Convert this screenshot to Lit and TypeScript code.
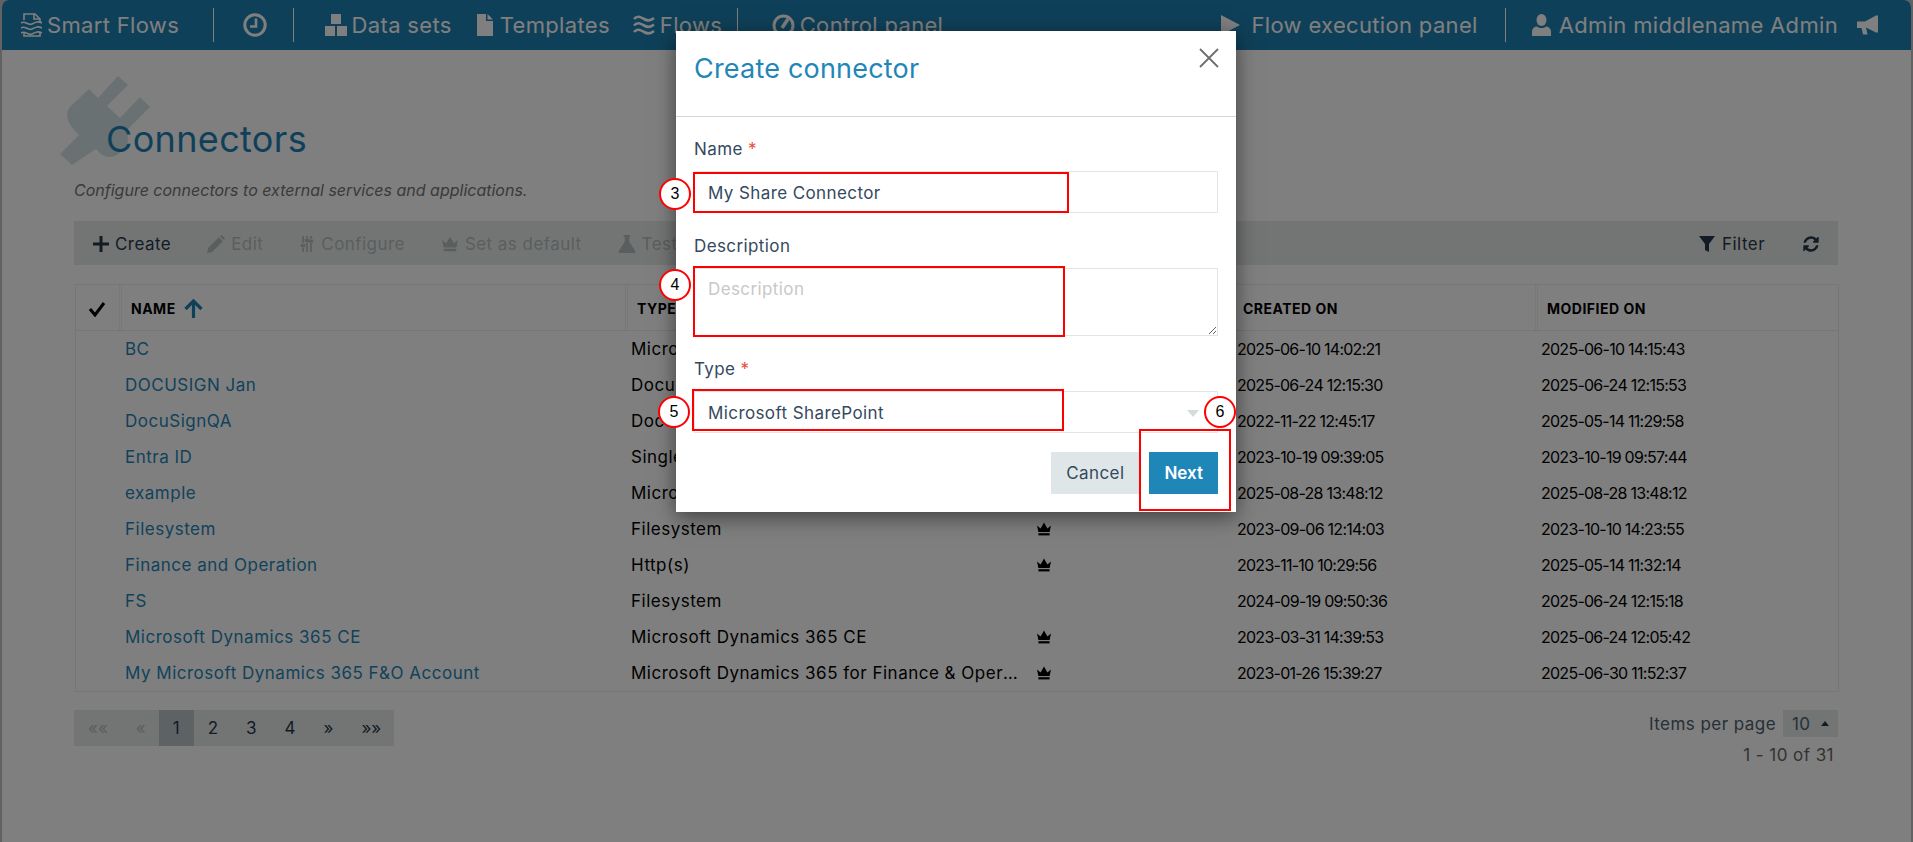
import { LitElement, html, css } from "lit";
import { customElement } from "lit/decorators.js";

const crown = html`<svg class="ic" viewBox="0 0 16 16"><path d="M1 4.500 4.600 7.400 8 1.500l3.400 5.900L15 4.500 13.600 11H2.400z" fill="currentColor"/><rect x="2.400" y="12.200" width="11.200" height="2.200" fill="currentColor"/></svg>`;
const refresh = "M1639 1056q0 5-1 7-64 268-268 434.5t-478 166.5q-146 0-282.5-55t-243.5-157l-129 129q-19 19-45 19t-45-19-19-45v-448q0-26 19-45t45-19h448q26 0 45 19t19 45-19 45l-137 137q71 66 161 102t187 36q134 0 250-65t186-179q11-17 53-117 8-23 30-23h192q13 0 22.5 9.5t9.5 22.5zm25-800v448q0 26-19 45t-45 19h-448q-26 0-45-19t-19-45 19-45l138-138q-148-137-349-137-134 0-250 65t-186 179q-11 17-53 117-8 23-30 23h-199q-13 0-22.5-9.5t-9.5-22.5v-7q65-268 270-434.5t480-166.5q146 0 284 55.5t245 156.5l130-129q19-19 45-19t45 19 19 45z";

const rows: [string, string, boolean, string, string][] = [
  ["BC", "Microsoft Dynamics 365 Business Central", false, "2025-06-10 14:02:21", "2025-06-10 14:15:43"],
  ["DOCUSIGN Jan", "DocuSign", false, "2025-06-24 12:15:30", "2025-06-24 12:15:53"],
  ["DocuSignQA", "DocuSign", false, "2022-11-22 12:45:17", "2025-05-14 11:29:58"],
  ["Entra ID", "Single Sign-On", false, "2023-10-19 09:39:05", "2023-10-19 09:57:44"],
  ["example", "Microsoft SharePoint", false, "2025-08-28 13:48:12", "2025-08-28 13:48:12"],
  ["Filesystem", "Filesystem", true, "2023-09-06 12:14:03", "2023-10-10 14:23:55"],
  ["Finance and Operation", "Http(s)", true, "2023-11-10 10:29:56", "2025-05-14 11:32:14"],
  ["FS", "Filesystem", false, "2024-09-19 09:50:36", "2025-06-24 12:15:18"],
  ["Microsoft Dynamics 365 CE", "Microsoft Dynamics 365 CE", true, "2023-03-31 14:39:53", "2025-06-24 12:05:42"],
  ["My Microsoft Dynamics 365 F&O Account", "Microsoft Dynamics 365 for Finance & Operations", true, "2023-01-26 15:39:27", "2025-06-30 11:52:37"],
];

@customElement("app-root")
export class AppRoot extends LitElement {
  static styles = css`
    :host { display: block; font-family: Inter, "Liberation Sans", sans-serif; background: #c4c4c4; }
    * { box-sizing: border-box; }
    .stage { position: relative; height: 842px; overflow: hidden; }
    .app { margin: 0 2px; height: 842px; background: #fff; border-radius: 7px 7px 0 0; overflow: hidden; }
    .nav { height: 50px; background: #1f80b2; color: #fff; display: flex; align-items: center; padding: 0 33px 0 19px; font-size: 22px; letter-spacing: .33px; white-space: nowrap; }
    .nav svg { flex: none; display: block; }
    .item { display: flex; align-items: center; gap: 5px; }
    .sep { width: 1px; height: 34px; background: #fff; flex: none; }
    .s1 { margin-left: 33.500px; } .c1 { margin-left: 29px; } .s2 { margin-left: 26px; }
    .d1 { margin-left: 31px; } .t1 { margin-left: 25px; } .f1 { margin-left: 23px; }
    .s3 { margin-left: 14.500px; } .cp { margin-left: 34px; }
    .fe { margin-left: auto; } .s4 { margin-left: 27px; } .u1 { margin-left: 26px; } .m1 { margin-left: 19px; }
    .t-ic { gap: 7px; } .p-ic { gap: 11px; } .u1.t-ic { gap: 8px; }

    .content { padding: 67px 73px 0 72px; }
    .title { position: relative; padding-left: 32px; }
    .plug { position: absolute; left: -14px; top: -47px; width: 90px; height: 95px; color: #d5e2e4; }
    h1 { position: relative; margin: 0; font-size: 36px; line-height: 44px; font-weight: 400; letter-spacing: .35px; color: #1f80b2; }
    .sub { margin: 19px 0 0; font-size: 16px; line-height: 20px; font-style: italic; color: #757575; }

    .toolbar { margin-top: 21px; height: 44px; background: #e6eaea; display: flex; align-items: center; padding: 1px 0 0 19px; font-size: 17px; letter-spacing: .45px; color: #b5bdbe; }
    .tool { display: flex; align-items: center; gap: 6px; margin-right: 36px; }
    .tool.on { color: #26384a; }
    .ic { width: 16px; height: 16px; flex: none; display: block; }
    .toolbar .wide { width: 18px; height: 18px; }
    .end { margin-left: auto; margin-right: 18px; display: flex; align-items: center; color: #26384a; }
    .end .tool { margin-right: 37px; gap: 7px; }
    .end .tool:last-child { margin: 0; }

    .table { margin: 19px 0 0 1px; border: 1px solid #ebefef; width: 1764px; }
    .hd, .row { display: grid; grid-template-columns: 43px 506px 405px 201px 304px 1fr; align-items: center; }
    .hd { height: 46px; border-bottom: 1px solid #ebefef; font-size: 14px; font-weight: 700; color: #000; text-transform: uppercase; letter-spacing: .5px; }
    .hd > div { padding: 2px 0 0 9px; height: 100%; display: flex; align-items: center; gap: 8px; border-left: 3px double #eff3f3; }
    .hd > div:first-child { padding-left: 12px; border-left: 0; }
    .row { height: 36px; font-size: 17px; letter-spacing: .5px; color: #000; }
    .row > div { padding: 0 6px; white-space: nowrap; overflow: hidden; text-overflow: ellipsis; }
    .row > .date { font-size: 16px; letter-spacing: -.74px; }
    .row a { color: #2585b5; }

    .foot { display: flex; justify-content: space-between; margin-top: 18px; }
    .pager { display: flex; height: 36px; background: #e6eaea; font-size: 17px; color: #26384a; align-items: center; }
    .pager span { padding: 0 14px; height: 100%; display: flex; align-items: center; }
    .pager .off { color: #b5bdbe; }
    .pager .off + .off { padding-right: 13px; }
    .pager .cur { background: #bac6ca; }
    .pager span:last-child { padding-right: 13px; }
    .right { display: flex; flex-direction: column; align-items: flex-end; font-size: 17px; letter-spacing: .45px; color: #4d6070; }
    .ipp { display: flex; align-items: center; gap: 7px; }
    .size { width: 55px; height: 27px; background: #e6eaea; display: flex; align-items: center; padding-left: 9px; gap: 10px; }
    .caret-up { width: 0; height: 0; border: 4.500px solid transparent; border-top: 0; border-bottom: 5px solid #26384a; }
    .count { margin: 8px 4px 0 0; line-height: 20px; color: #666; }

    .backdrop { position: absolute; inset: 0; background: rgba(0,0,0,.5); }
    .modal { position: absolute; left: 676px; top: 31px; width: 560px; height: 481px; background: #fff; box-shadow: 0 5px 20px rgba(0,0,0,.5); color: #34495e; font-size: 17px; letter-spacing: .4px; }
    .mh { height: 86px; border-bottom: 1px solid #cfd8da; padding: 20px 18px 0; display: flex; justify-content: space-between; align-items: flex-start; }
    h2 { margin: 1px 0 0; font-size: 27px; line-height: 34px; font-weight: 400; letter-spacing: .2px; color: #1f86b8; }
    .x { width: 20px; height: 20px; color: #6e6e6e; margin: -3px -1px 0 0; display: block; }
    .mb { padding: 20px 18px 0 18px; }
    .group { margin-bottom: 21px; }
    label { display: block; line-height: 24px; margin-bottom: 10px; color: #34495e; }
    .req { color: #e74c3c; }
    .field { display: block; width: 100%; height: 42px; border: 1px solid #dfe6e7; padding: 2px 13px 0; font: inherit; letter-spacing: inherit; color: #34495e; outline: none; background: #fff; border-radius: 0; }
    textarea.field { height: 68px; padding: 10px 13px; resize: vertical; display: block; }
    textarea.field::placeholder { color: #c8c8c8; }
    .select { display: flex; align-items: center; justify-content: space-between; padding-right: 18px; }
    .select i { width: 0; height: 0; border: 6px solid transparent; border-bottom: 0; border-top: 7px solid #d6dcdd; }
    .btns { display: flex; justify-content: flex-end; gap: 10px; margin-top: -2px; }
    .btn { height: 42px; border: 0; padding: 0 15px; font: inherit; letter-spacing: inherit; background: #dfe6e7; color: #34495e; }
    .btn.go { background: #1f86b8; color: #fff; font-weight: 600; letter-spacing: 0; }

    .box { position: absolute; border: 2px solid #f00; }
    .b3 { left: 17px; top: 141px; width: 376px; height: 41px; }
    .b4 { left: 17px; top: 235px; width: 372px; height: 71px; }
    .b5 { left: 16px; top: 358px; width: 372px; height: 42px; }
    .b6 { left: 463px; top: 398px; width: 92px; height: 82px; }
    .num { position: absolute; width: 32px; height: 32px; border-radius: 50%; border: 2px solid #f00; background: #fff; color: #000; font: 16px/28px "Liberation Sans", sans-serif; letter-spacing: 0; text-align: center; }
    .n3 { left: -17px; top: 147px; } .n4 { left: -17px; top: 238px; }
    .n5 { left: -18px; top: 365px; } .n6 { left: 528px; top: 365px; }
  `;

  render() {
    return html`<div class="stage">
      <div class="app">
        <div class="nav">
          <div class="item">
            <svg width="21" height="24" viewBox="0 0 21 24" fill="none" stroke="currentColor" stroke-width="1.600"><path d="M3 7V1h11l5 5v3M3 20v3h16v-3"/><path d="M13 1v5h6" /><path d="M0 10c4-3 7 3 11 1s6-3 10-1M0 15c4-3 7 3 11 1s6-3 10-1M0 20c4-3 7 3 11 1s6-3 10-1"/></svg>
            <span>Smart Flows</span>
          </div>
          <div class="sep s1"></div>
          <svg class="c1" width="24" height="24" viewBox="0 0 24 24" fill="none" stroke="currentColor" stroke-width="3"><circle cx="12" cy="12" r="10.200"/><path d="M13 5.500V13.500H7" stroke-width="2.600"/></svg>
          <div class="sep s2"></div>
          <div class="item d1"><svg width="22" height="22" viewBox="0 0 22 22" fill="currentColor"><rect x="6" y="0" width="10" height="10"/><rect x="0" y="12" width="10" height="10"/><rect x="12" y="12" width="10" height="10"/></svg><span>Data sets</span></div>
          <div class="item t1 t-ic"><svg width="16" height="22" viewBox="0 0 16 22" fill="currentColor"><path d="M0 0h9v7h7v15H0z"/><path d="M10.500 0 16 5.500h-5.500z"/></svg><span>Templates</span></div>
          <div class="item f1"><svg width="22" height="20" viewBox="0 0 22 20" fill="none" stroke="currentColor" stroke-width="2.600"><path d="M1 4c3.500-4 6.500-2 10 0s6.500 2 10-1M1 10.500c3.500-4 6.500-2 10 0s6.500 2 10-1M1 17c3.500-4 6.500-2 10 0s6.500 2 10-1"/></svg><span>Flows</span></div>
          <div class="sep s3"></div>
          <div class="item cp"><svg width="23" height="22" viewBox="0 0 23 22" fill="none" stroke="currentColor"><circle cx="11.500" cy="11.500" r="9.500" stroke-width="3"/><path d="M10 14 16 5" stroke-width="3.500"/></svg><span>Control panel</span></div>
          <div class="item fe p-ic"><svg width="19" height="20" viewBox="0 0 19 20" fill="currentColor"><path d="M0 0 19 10 0 20z"/></svg><span>Flow execution panel</span></div>
          <div class="sep s4"></div>
          <div class="item u1 t-ic"><svg width="19" height="22" viewBox="0 0 19 22" fill="currentColor"><ellipse cx="9.500" cy="6" rx="5" ry="6"/><path d="M0 22v-4c0-4 3-5.500 5-5.500 2.500 2 6.500 2 9 0 2 0 5 1.500 5 5.500v4z"/></svg><span>Admin middlename Admin</span></div>
          <svg class="m1" width="21" height="20" viewBox="0 0 21 20" fill="currentColor"><path d="M0 6.500h8L19 .5h2v17h-2L9 12.500l1.500 7H6L4.500 13H0z"/></svg>
        </div>
        <div class="content">
          <div class="title">
            <svg class="plug" viewBox="0 0 90 95" fill="currentColor"><path d="M29 19l9 9L58 6l10 9-21 21 13 12 20-21 10 10-24 24c4 8 2 14-5 21-9 8-18 6-25-3L12 95 0 84l19-19C5 52 5 42 11 36z"/></svg>
            <h1>Connectors</h1>
          </div>
          <p class="sub">Configure connectors to external services and applications.</p>
          <div class="toolbar">
            <div class="tool on"><svg class="ic" viewBox="0 0 16 16" fill="currentColor"><path d="M6.500 0h3v6.500H16v3H9.500V16h-3V9.500H0v-3h6.500z"/></svg>Create</div>
            <div class="tool"><svg class="ic wide" viewBox="0 0 16 16" fill="currentColor"><path d="M0 16l1-4.500L10.500 2l3.500 3.500L4.500 15zM11.500 1 13 0l3 3-1 1.500z"/></svg>Edit</div>
            <div class="tool"><svg class="ic" viewBox="0 0 16 18" fill="currentColor"><path d="M2.500 0h2v8h-2zM2.500 13h2v5h-2zM7 0h2v3H7zM7 8h2v10H7zM11.500 0h2v3h-2zM11.500 8h2v10h-2zM1 9h5v3.500H1zM10 4h5v3.500h-5zM5.500 3.500h5v3.500h-5z" /></svg>Configure</div>
            <div class="tool"><svg class="ic wide" viewBox="0 0 16 16"><path d="M1 4.500 4.600 7.400 8 1.500l3.400 5.900L15 4.500 13.600 11H2.400z" fill="currentColor"/><rect x="2.400" y="12.200" width="11.200" height="2.200" fill="currentColor"/></svg>Set as default</div>
            <div class="tool"><svg class="ic wide" viewBox="0 0 16 16" fill="currentColor"><path d="M5 0h6v1.500h-1V6l5.500 8.500c.4.800 0 1.500-1 1.500H1.500c-1 0-1.400-.7-1-1.500L6 6V1.500H5z"/></svg>Test</div>
            <div class="end">
              <div class="tool"><svg class="ic" viewBox="0 0 16 16" fill="currentColor"><path d="M0 0h16L10 8v8l-4-2V8z"/></svg>Filter</div>
              <div class="tool"><svg class="ic wide" viewBox="0 0 1792 1792" fill="currentColor"><path d="${refresh}"/></svg></div>
            </div>
          </div>
          <div class="table">
            <div class="hd">
              <div><svg width="18" height="16" viewBox="0 0 18 16" fill="none" stroke="#000" stroke-width="3"><path d="M2 8l5 6L16 2"/></svg></div>
              <div>Name <svg width="19" height="19" viewBox="0 0 19 19" fill="none" stroke="#1f80b2" stroke-width="3.200"><path d="M9.500 19V2M1.500 10l8-8 8 8"/></svg></div>
              <div>Type</div><div></div><div>Created on</div><div>Modified on</div>
            </div>
            ${rows.map((r) => html`<div class="row">
              <div></div><div><a>${r[0]}</a></div><div>${r[1]}</div>
              <div>${r[2] ? crown : ""}</div><div class="date">${r[3]}</div><div class="date">${r[4]}</div>
            </div>`)}
          </div>
          <div class="foot">
            <div class="pager">
              <span class="off">««</span><span class="off">«</span><span class="cur">1</span><span>2</span><span>3</span><span>4</span><span>»</span><span>»»</span>
            </div>
            <div class="right">
              <div class="ipp"><span>Items per page</span><div class="size"><span>10</span><i class="caret-up"></i></div></div>
              <div class="count">1 - 10 of 31</div>
            </div>
          </div>
        </div>
      </div>
      <div class="backdrop"></div>
      <div class="modal">
        <div class="mh">
          <h2>Create connector</h2>
          <svg class="x" viewBox="0 0 20 20" fill="none" stroke="currentColor" stroke-width="1.800"><path d="M1 1l18 18M19 1 1 19"/></svg>
        </div>
        <div class="mb">
          <div class="group"><label>Name <span class="req">*</span></label><input class="field" .value=${"My Share Connector"} /></div>
          <div class="group"><label>Description</label><textarea class="field" placeholder="Description"></textarea></div>
          <div class="group"><label>Type <span class="req">*</span></label><div class="field select"><span>Microsoft SharePoint</span><i></i></div></div>
          <div class="btns"><button class="btn">Cancel</button><button class="btn go">Next</button></div>
        </div>
        <div class="box b3"></div><div class="box b4"></div><div class="box b5"></div><div class="box b6"></div>
        <div class="num n3">3</div><div class="num n4">4</div><div class="num n5">5</div><div class="num n6">6</div>
      </div>
    </div>`;
  }
}
